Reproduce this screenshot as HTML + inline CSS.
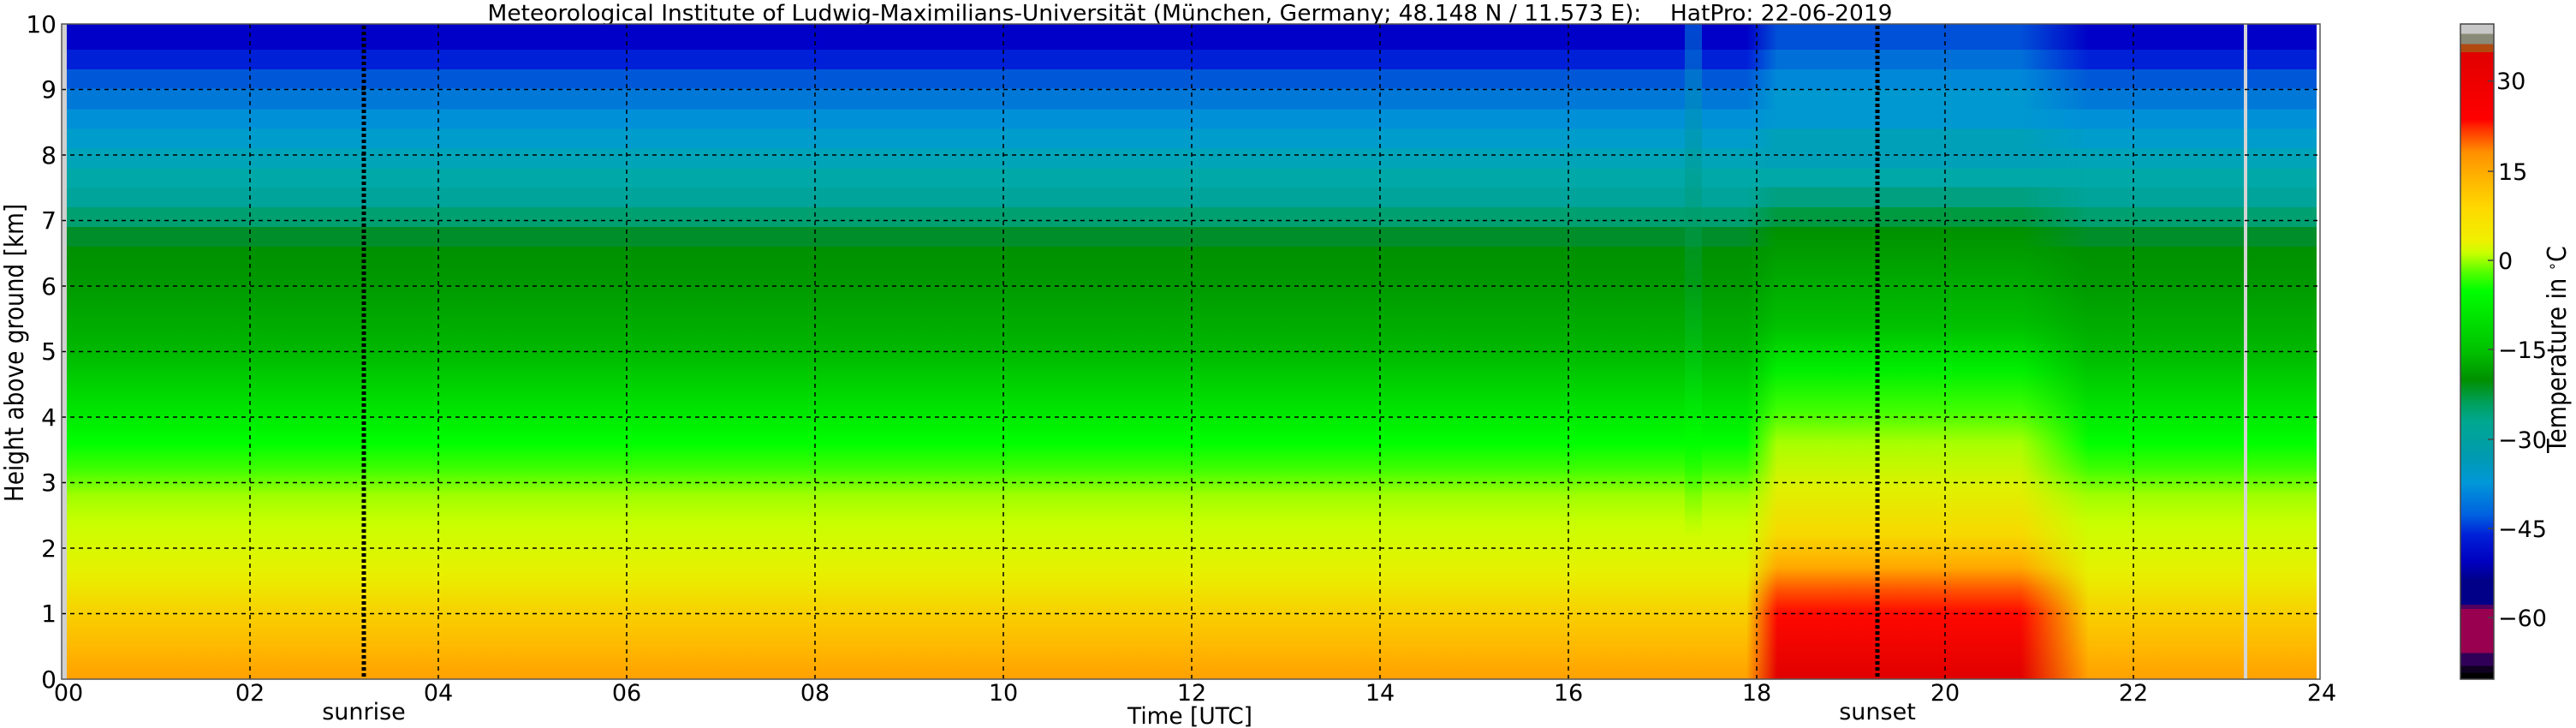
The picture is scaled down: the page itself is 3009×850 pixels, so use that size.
<!DOCTYPE html>
<html><head><meta charset="utf-8"><style>html,body{margin:0;padding:0;background:#fff;width:3009px;height:850px;overflow:hidden}svg{display:block}</style></head><body>
<svg width="3009" height="850" viewBox="0 0 3009 850" xmlns="http://www.w3.org/2000/svg" font-family="DejaVu Sans, Liberation Sans, sans-serif">
<defs>
<linearGradient id="base" x1="0" y1="0" x2="0" y2="1">
<stop offset="0" stop-color="#0000c8"/><stop offset="0.039" stop-color="#0000c8"/>
<stop offset="0.039" stop-color="#0020d8"/><stop offset="0.069" stop-color="#0020d8"/>
<stop offset="0.069" stop-color="#0058d8"/><stop offset="0.099" stop-color="#0058d8"/>
<stop offset="0.099" stop-color="#0078d8"/><stop offset="0.13" stop-color="#0078d8"/>
<stop offset="0.13" stop-color="#0090d8"/><stop offset="0.16" stop-color="#0090d8"/>
<stop offset="0.16" stop-color="#009ccc"/><stop offset="0.19" stop-color="#009ccc"/>
<stop offset="0.19" stop-color="#00a4b8"/><stop offset="0.22" stop-color="#00a4b8"/>
<stop offset="0.22" stop-color="#00a8a8"/><stop offset="0.25" stop-color="#00a8a8"/>
<stop offset="0.25" stop-color="#00a49a"/><stop offset="0.28" stop-color="#00a49a"/>
<stop offset="0.28" stop-color="#00a070"/><stop offset="0.31" stop-color="#00a070"/>
<stop offset="0.31" stop-color="#008e2a"/><stop offset="0.34" stop-color="#008e2a"/>
<stop offset="0.34" stop-color="#009000"/>
<stop offset="0.40" stop-color="#009a00"/>
<stop offset="0.50" stop-color="#00b800"/>
<stop offset="0.58" stop-color="#00e000"/>
<stop offset="0.64" stop-color="#00ff00"/>
<stop offset="0.68" stop-color="#40ff00"/>
<stop offset="0.72" stop-color="#a0ff00"/>
<stop offset="0.76" stop-color="#c8ff00"/>
<stop offset="0.84" stop-color="#e8f000"/>
<stop offset="0.90" stop-color="#f8d000"/>
<stop offset="0.96" stop-color="#ffb400"/>
<stop offset="1" stop-color="#ffa000"/>
</linearGradient>
<linearGradient id="warm" x1="0" y1="0" x2="0" y2="1">
<stop offset="0" stop-color="#0050d8"/><stop offset="0.039" stop-color="#0050d8"/>
<stop offset="0.039" stop-color="#0070d8"/><stop offset="0.069" stop-color="#0070d8"/>
<stop offset="0.069" stop-color="#0088d8"/><stop offset="0.099" stop-color="#0088d8"/>
<stop offset="0.099" stop-color="#0098d0"/><stop offset="0.16" stop-color="#0098d0"/>
<stop offset="0.16" stop-color="#00a0b8"/><stop offset="0.22" stop-color="#00a0b8"/>
<stop offset="0.22" stop-color="#00a8a8"/><stop offset="0.249" stop-color="#00a8a8"/>
<stop offset="0.249" stop-color="#00a080"/><stop offset="0.28" stop-color="#00a080"/>
<stop offset="0.28" stop-color="#009a40"/><stop offset="0.31" stop-color="#009a40"/>
<stop offset="0.31" stop-color="#009000"/>
<stop offset="0.46" stop-color="#00c000"/>
<stop offset="0.53" stop-color="#00f000"/>
<stop offset="0.59" stop-color="#40ff00"/>
<stop offset="0.64" stop-color="#a8ff00"/>
<stop offset="0.71" stop-color="#e0f000"/>
<stop offset="0.78" stop-color="#f8d800"/>
<stop offset="0.83" stop-color="#ffa800"/>
<stop offset="0.865" stop-color="#ff5000"/>
<stop offset="0.9" stop-color="#ff0800"/>
<stop offset="1" stop-color="#e00000"/>
</linearGradient>
<linearGradient id="hm" gradientUnits="userSpaceOnUse" x1="2040" y1="0" x2="2440" y2="0">
<stop offset="0" stop-color="#000"/><stop offset="0.09" stop-color="#fff"/>
<stop offset="0.8" stop-color="#fff"/><stop offset="1" stop-color="#000"/>
</linearGradient>
<mask id="m1"><rect x="2040" y="28" width="400" height="765" fill="url(#hm)"/></mask>
<radialGradient id="glow" cx="0.5" cy="1" r="0.5">
<stop offset="0" stop-color="#ff3000" stop-opacity="0.75"/><stop offset="1" stop-color="#ff5000" stop-opacity="0"/>
</radialGradient>
<linearGradient id="streak" x1="0" y1="0" x2="0" y2="1">
<stop offset="0" stop-color="#0090e0" stop-opacity="0.5"/>
<stop offset="0.5" stop-color="#00a040" stop-opacity="0.35"/>
<stop offset="0.8" stop-color="#00ff00" stop-opacity="0.5"/>
<stop offset="1" stop-color="#00ff00" stop-opacity="0"/>
</linearGradient>
<linearGradient id="cb" x1="0" y1="0" x2="0" y2="1">
<stop offset="0" stop-color="#c8c8c8"/><stop offset="0.015" stop-color="#c8c8c8"/>
<stop offset="0.015" stop-color="#8a8a78"/><stop offset="0.031" stop-color="#8a8a78"/>
<stop offset="0.031" stop-color="#b04a10"/><stop offset="0.043" stop-color="#b04a10"/>
<stop offset="0.043" stop-color="#e00000"/>
<stop offset="0.146" stop-color="#ff0000"/>
<stop offset="0.16" stop-color="#ff3000"/>
<stop offset="0.196" stop-color="#ff9000"/>
<stop offset="0.24" stop-color="#ffb800"/>
<stop offset="0.28" stop-color="#ffd800"/>
<stop offset="0.33" stop-color="#f0f000"/>
<stop offset="0.35" stop-color="#c8ff00"/>
<stop offset="0.38" stop-color="#50ff00"/>
<stop offset="0.407" stop-color="#00ff00"/>
<stop offset="0.50" stop-color="#00c000"/>
<stop offset="0.543" stop-color="#009000"/>
<stop offset="0.58" stop-color="#00a060"/>
<stop offset="0.607" stop-color="#00a890"/>
<stop offset="0.66" stop-color="#009ab0"/>
<stop offset="0.70" stop-color="#0098d8"/>
<stop offset="0.75" stop-color="#0060e0"/>
<stop offset="0.78" stop-color="#0020d8"/>
<stop offset="0.82" stop-color="#0000c0"/>
<stop offset="0.85" stop-color="#000088"/><stop offset="0.886" stop-color="#000088"/>
<stop offset="0.886" stop-color="#500060"/><stop offset="0.893" stop-color="#500060"/>
<stop offset="0.893" stop-color="#990050"/><stop offset="0.96" stop-color="#990050"/>
<stop offset="0.96" stop-color="#300058"/><stop offset="0.98" stop-color="#300058"/>
<stop offset="0.98" stop-color="#100020"/><stop offset="0.99" stop-color="#100020"/>
<stop offset="0.99" stop-color="#000"/><stop offset="1" stop-color="#000"/>
</linearGradient>
<clipPath id="pc"><rect x="72" y="28" width="2638" height="765"/></clipPath>
</defs>

<text x="1390" y="24" font-size="26" text-anchor="middle" textLength="1641" lengthAdjust="spacingAndGlyphs" xml:space="preserve">Meteorological Institute of Ludwig-Maximilians-Universität (München, Germany; 48.148 N / 11.573 E):    HatPro: 22-06-2019</text>

<!-- plot -->
<g clip-path="url(#pc)">
<rect x="72" y="28" width="2638" height="765" fill="url(#base)"/>
<ellipse cx="1950" cy="793" rx="420" ry="70" fill="url(#glow)"/>
<rect x="1968" y="28" width="20" height="600" fill="url(#streak)"/>
<rect x="2040" y="28" width="400" height="765" fill="url(#warm)" mask="url(#m1)"/>
</g>
<rect x="72" y="28" width="6" height="765" fill="#d0d0d0"/>
<rect x="2621" y="28" width="4" height="765" fill="#d4d4d4"/>
<rect x="2706" y="28" width="4" height="765" fill="#fff"/>

<g stroke="#000" stroke-width="1.5" stroke-dasharray="5,5" fill="none">
<path d="M72 104.5H2710M72 181H2710M72 257.5H2710M72 334H2710M72 410.5H2710M72 487H2710M72 563.5H2710M72 640H2710M72 716.5H2710"/>
<path d="M292 28V793M512 28V793M732 28V793M952 28V793M1172 28V793M1392 28V793M1612 28V793M1832 28V793M2052 28V793M2272 28V793M2492 28V793"/>
<path d="M72 28V793" stroke="#444" stroke-width="1"/>
</g>
<g stroke="#000" stroke-width="5" stroke-dasharray="4,3">
<path d="M425 30V793M2193 30V793"/>
</g>
<rect x="72" y="28" width="2638" height="765" fill="none" stroke="#555" stroke-width="1.5"/>

<g font-size="28" text-anchor="end">
<text x="66" y="38">10</text><text x="66" y="114">9</text><text x="66" y="191">8</text><text x="66" y="267">7</text><text x="66" y="344">6</text><text x="66" y="420">5</text><text x="66" y="497">4</text><text x="66" y="573">3</text><text x="66" y="650">2</text><text x="66" y="726">1</text><text x="66" y="803">0</text>
</g>
<g font-size="27" text-anchor="middle">
<text x="80" y="818">00</text><text x="292" y="818">02</text><text x="512" y="818">04</text><text x="732" y="818">06</text><text x="952" y="818">08</text><text x="1172" y="818">10</text><text x="1392" y="818">12</text><text x="1612" y="818">14</text><text x="1832" y="818">16</text><text x="2052" y="818">18</text><text x="2272" y="818">20</text><text x="2492" y="818">22</text><text x="2712" y="818">24</text>
<text x="425" y="840">sunrise</text>
<text x="2193" y="840">sunset</text>
<text x="1390" y="845" textLength="146" lengthAdjust="spacingAndGlyphs">Time [UTC]</text>
</g>
<g transform="translate(27,412) rotate(-90) scale(0.88,1)"><text x="0" y="0" font-size="30" text-anchor="middle">Height above ground [km]</text></g>

<!-- colorbar -->
<rect x="2874" y="28" width="39" height="765" fill="url(#cb)" stroke="#444" stroke-width="1.5"/>
<g stroke="#444" stroke-width="1.5">
<path d="M2906 94.5H2913M2906 200H2913M2906 304H2913M2906 408H2913M2906 513H2913M2906 617H2913M2906 721H2913"/>
</g>
<g font-size="27">
<text x="2916" y="104">30</text><text x="2918" y="210">15</text><text x="2918" y="314">0</text><text x="2918" y="418">−15</text><text x="2918" y="523">−30</text><text x="2918" y="627">−45</text><text x="2918" y="731">−60</text>
</g>
<g transform="translate(2997,408) rotate(-90) scale(0.9,1)"><text x="0" y="0" font-size="30" text-anchor="middle">Temperature in <tspan font-size="18" dy="-10">∘</tspan><tspan dy="10">C</tspan></text></g>
</svg>
</body></html>
